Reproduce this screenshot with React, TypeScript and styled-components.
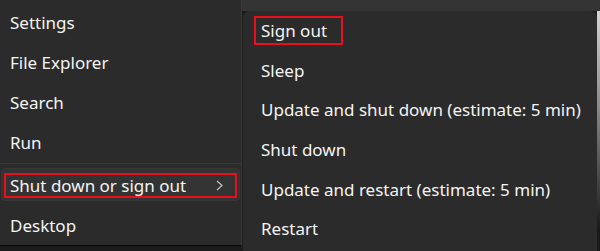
import * as React from "react";
import styled, { createGlobalStyle } from "styled-components";

const GlobalStyle = createGlobalStyle`
  html, body {
    margin: 0;
    padding: 0;
    background: #1c1c1c;
  }
  body {
    font-family: "Noto Sans", "Open Sans", sans-serif;
    -webkit-font-smoothing: antialiased;
  }
`;

const Screen = styled.div`
  display: flex;
  width: 600px;
  height: 251px;
  overflow: hidden;
  background: #1c1c1c;
`;

const StartMenu = styled.div`
  width: 242px;
  height: 246px;
  background: #2b2b2b;
  border-right: 1px solid #383838;
  border-bottom: 1px solid #0a0a0a;
  display: flex;
  flex-direction: column;
  padding-top: 2px;
  box-sizing: border-box;
  flex-shrink: 0;
`;

const MenuItem = styled.div<{ active?: boolean }>`
  position: relative;
  height: 40px;
  display: flex;
  align-items: center;
  padding-left: 10px;
  padding-right: 16px;
  color: #f4f4f4;
  font-size: 17px;
  box-sizing: border-box;
  &::before {
    content: "";
    display: ${({ active }) => (active ? "block" : "none")};
    position: absolute;
    left: 1px;
    right: 1px;
    top: 3px;
    bottom: 4px;
    border-radius: 4px;
    background: #333333;
    border: 1px solid #383838;
  }
`;

const Label = styled.span`
  position: relative;
  flex: 1;
`;

const Separator = styled.div`
  height: 3px;
  display: flex;
  align-items: center;
  &::after {
    content: "";
    flex: 1;
    height: 1px;
    background: #3a3a3a;
  }
`;

const Callout = styled.div<{ inset: string }>`
  position: absolute;
  inset: ${({ inset }) => inset};
  border: 2px solid #e8101a;
  pointer-events: none;
`;

const Chevron = styled.svg`
  position: relative;
  width: 7px;
  height: 11px;
  margin-right: 2px;
`;

const RightSide = styled.div`
  flex: 1;
  display: flex;
  flex-direction: column;
`;

const TopBand = styled.div`
  height: 11px;
  background: #343434;
  flex-shrink: 0;
`;

const SubRow = styled.div`
  flex: 1;
  display: flex;
`;

const SubMenu = styled.div`
  flex: 1;
  background: #2b2b2b;
  border-left: 1px solid #1e1e1e;
  border-radius: 7px 7px 0 0;
  display: flex;
  flex-direction: column;
`;

const SubItem = styled.div`
  position: relative;
  height: 39.6px;
  display: flex;
  align-items: center;
  padding-left: 18px;
  color: #f4f4f4;
  font-size: 17px;
  white-space: nowrap;
`;

const EdgeStrip = styled.div`
  width: 3px;
  background: linear-gradient(#d4d4d4, #8a8a8a 40%, #1a1a1a 90%);
`;

const leftItems = ["Settings", "File Explorer", "Search", "Run"];

const subItems = [
  "Sign out",
  "Sleep",
  "Update and shut down (estimate: 5 min)",
  "Shut down",
  "Update and restart (estimate: 5 min)",
  "Restart",
];

export default function App() {
  return (
    <>
      <GlobalStyle />
      <Screen>
        <StartMenu>
          {leftItems.map((item) => (
            <MenuItem key={item}>
              <Label>{item}</Label>
            </MenuItem>
          ))}
          <Separator />
          <MenuItem active>
            <Label>Shut down or sign out</Label>
            <Chevron viewBox="0 0 7 11">
              <polyline points="1,1 6,5.5 1,10" fill="none" stroke="#c4c4c4" strokeWidth="1.2" />
            </Chevron>
            <Callout inset="8px 4px 7px 4px" />
          </MenuItem>
          <MenuItem>
            <Label>Desktop</Label>
          </MenuItem>
        </StartMenu>
        <RightSide>
          <TopBand />
          <SubRow>
            <SubMenu>
              {subItems.map((item, i) => (
                <SubItem key={item}>
                  {item}
                  {i === 0 && <Callout inset="5px auto 6px 11px" style={{ width: 85 }} />}
                </SubItem>
              ))}
            </SubMenu>
            <EdgeStrip />
          </SubRow>
        </RightSide>
      </Screen>
    </>
  );
}
